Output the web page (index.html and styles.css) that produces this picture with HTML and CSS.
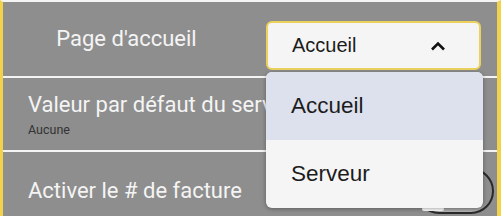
FILE: index.html
```html
<!DOCTYPE html>
<html lang="fr">
  <head>
    <meta charset="UTF-8" />
    <meta name="viewport" content="width=device-width, initial-scale=1.0" />
    <title>Paramètres</title>
    <link rel="stylesheet" href="styles.css">
  </head>
  <body>
    <div class="settings">
      <div class="row row-home">
        <div class="label label-center">Page d'accueil</div>
        <div class="control">
          <div class="select">
            <span>Accueil</span>
            <svg class="caret" width="16" height="10" viewBox="0 0 16 10">
              <path d="M2 8.5 L8 2.5 L14 8.5" fill="none" stroke="#111" stroke-width="2.6" />
            </svg>
          </div>
          <div class="menu">
            <div class="option selected">Accueil</div>
            <div class="option">Serveur</div>
          </div>
        </div>
      </div>
      <div class="row row-server">
        <div class="label">
          <div class="title">Valeur par défaut du serveur</div>
          <div class="sub">Aucune</div>
        </div>
      </div>
      <div class="row row-invoice">
        <div class="label label-low">Activer le # de facture</div>
        <div class="toggle"><span class="knob"></span></div>
      </div>
    </div>
  </body>
</html>
```

FILE: styles.css
```css
* {
  margin: 0;
  padding: 0;
  box-sizing: border-box;
}

body {
  font-family: Roboto, "Liberation Sans", sans-serif;
  background-color: #8e8e8e;
  width: 501px;
  height: 216px;
  overflow: hidden;
}

.settings {
  height: 216px;
  overflow: hidden;
  border-left: 3px solid #f2d24a;
  border-right: 4px solid #f2d24a;
  border-top: 2px solid #f4f4f4;
}

.row {
  display: flex;
  align-items: center;
  border-bottom: 2px solid #f4f4f4;
  position: relative;
}

.row-home {
  height: 76px;
}

.row-server {
  height: 74px;
}

.row-invoice {
  height: 64px;
  border-bottom: none;
}

.label {
  color: #f4f4f4;
  font-size: 22px;
  line-height: 26px;
  padding-left: 25px;
  white-space: nowrap;
}

.label-center {
  width: 247px;
  padding-left: 0;
  text-align: center;
}

.label-low {
  margin-top: 14px;
}

.sub {
  font-size: 12.5px;
  line-height: 13px;
  color: #333;
  margin-top: 5px;
}

.control {
  position: relative;
  align-self: flex-start;
  margin-top: 19px;
  margin-left: 16px;
}

.select {
  width: 215px;
  height: 49px;
  background-color: #f5f5f5;
  border: 2px solid #ecd25c;
  border-radius: 6px;
  display: flex;
  align-items: center;
  justify-content: space-between;
  padding: 0 33px 0 24px;
  font-family: "Liberation Sans", Arial, sans-serif;
  font-size: 20px;
  color: #1c1c1c;
}

.caret {
  display: block;
}

/* open dropdown, drawn over the rows below */
.menu {
  position: absolute;
  top: 51px;
  left: 0;
  width: 217px;
  background-color: #f5f5f5;
  border-radius: 6px;
  overflow: hidden;
  box-shadow: 0 1px 4px rgba(0, 0, 0, 0.35);
  z-index: 10;
}

.option {
  height: 68px;
  display: flex;
  align-items: center;
  padding-left: 25px;
  font-family: "Liberation Sans", Arial, sans-serif;
  font-size: 22.5px;
  color: #1c1c1c;
}

.option.selected {
  background-color: #dde1ed;
}

.toggle {
  position: absolute;
  left: 413px;
  top: 16px;
  width: 78px;
  height: 46px;
  border: 2px solid #2a2a2a;
  border-radius: 23px;
  background: linear-gradient(to bottom, #8e8e8e 80%, #b5b5b5);
}

.knob {
  position: absolute;
  left: 4px;
  bottom: 1px;
  width: 22px;
  height: 4px;
  border-radius: 3px;
  background-color: #fff;
}
```
